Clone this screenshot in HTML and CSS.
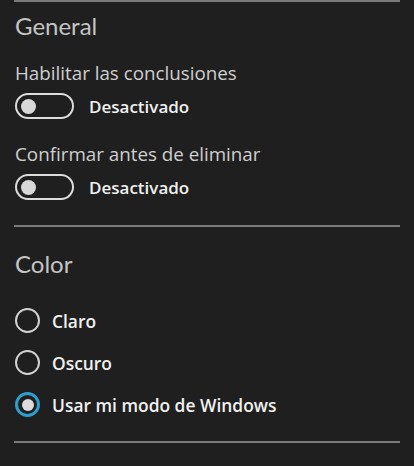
FILE: index.html
```html
<!DOCTYPE html>
<html lang="es">
<head>
    <meta charset="UTF-8">
    <meta name="viewport" content="width=device-width, initial-scale=1.0">
    <title>Configuración</title>
    <link rel="stylesheet" href="styles.css">
</head>
<body>

    <div class="panel">
        <section class="settings-group">
            <h2 class="group-title">General</h2>

            <div class="setting">
                <div class="setting-label">Habilitar las conclusiones</div>
                <label class="toggle-row">
                    <span class="toggle"><span class="knob"></span></span>
                    <span class="toggle-text">Desactivado</span>
                </label>
            </div>

            <div class="setting">
                <div class="setting-label">Confirmar antes de eliminar</div>
                <label class="toggle-row">
                    <span class="toggle"><span class="knob"></span></span>
                    <span class="toggle-text">Desactivado</span>
                </label>
            </div>
        </section>

        <section class="settings-group">
            <h2 class="group-title">Color</h2>

            <div class="radio-list">
                <label class="radio-row">
                    <span class="radio"></span>
                    <span class="radio-text">Claro</span>
                </label>
                <label class="radio-row">
                    <span class="radio"></span>
                    <span class="radio-text">Oscuro</span>
                </label>
                <label class="radio-row">
                    <span class="radio checked"></span>
                    <span class="radio-text">Usar mi modo de Windows</span>
                </label>
            </div>
        </section>
    </div>

</body>
</html>
```

FILE: styles.css
```css
body {
    margin: 0;
    background-color: #1f1f1f;
    font-family: "Open Sans", "Noto Sans", sans-serif;
    color: #d0d0d0;
}
.panel {
    margin: 0 14px;
    border-top: 2px solid #7a7a7a;
}
.settings-group {
    border-bottom: 2px solid #7a7a7a;
}
.group-title {
    margin: 8px 0 0 1px;
    font-family: Lato, "Open Sans", sans-serif;
    font-size: 24px;
    line-height: 32px;
    font-weight: 400;
    color: #c4c4c4;
}
.settings-group + .settings-group .group-title {
    margin-top: 21px;
}
.setting {
    margin-top: 19px;
}
.setting + .setting {
    margin-top: 23px;
}
.setting-label {
    padding-left: 1px;
    font-size: 18.8px;
    line-height: 24px;
    color: #cfcfcf;
}
.toggle-row {
    display: flex;
    align-items: center;
    margin-top: 8px;
    padding-left: 1px;
    height: 26px;
}
.toggle {
    box-sizing: border-box;
    width: 59px;
    height: 26px;
    border: 2px solid #dcdcdc;
    border-radius: 13px;
    display: flex;
    align-items: center;
    padding-left: 4px;
}
.knob {
    width: 15px;
    height: 15px;
    border-radius: 50%;
    background-color: #d8d8d8;
}
.toggle-text {
    margin-left: 15px;
    font-size: 17px;
    font-weight: 600;
    color: #f0f0f0;
}
.settings-group:first-child .setting:last-child {
    margin-bottom: 25px;
}
.radio-list {
    display: flex;
    flex-direction: column;
    gap: 17px;
    margin-top: 28px;
    margin-bottom: 24px;
    padding-left: 1px;
}
.radio-row {
    display: flex;
    align-items: center;
    height: 25px;
}
.radio {
    box-sizing: border-box;
    width: 25px;
    height: 25px;
    border: 2px solid #d2d2d2;
    border-radius: 50%;
    display: flex;
    align-items: center;
    justify-content: center;
}
.radio.checked {
    border: 3px solid #2e9fcc;
}
.radio.checked::after {
    content: "";
    width: 12px;
    height: 12px;
    border-radius: 50%;
    background-color: #dadada;
}
.radio-text {
    margin-left: 12px;
    font-size: 17.4px;
    font-weight: 600;
    color: #f0f0f0;
}
```
